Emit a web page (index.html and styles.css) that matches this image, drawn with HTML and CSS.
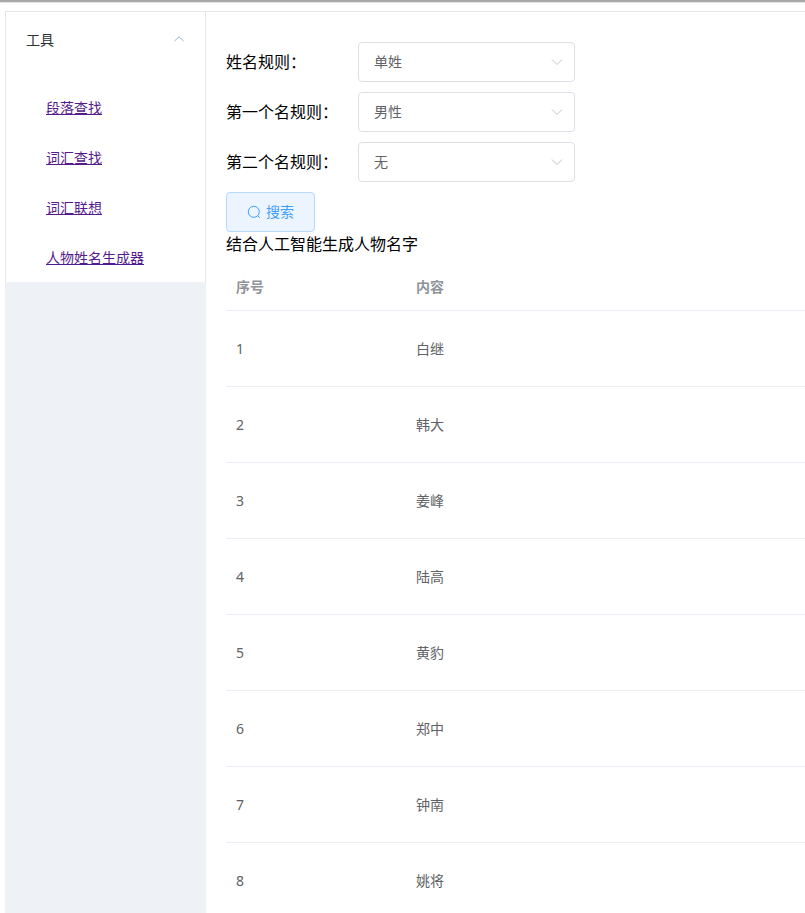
FILE: index.html
```html
<!DOCTYPE html>
<html lang="zh">
<head>
<meta charset="utf-8">
<title>人物姓名生成器</title>
<link rel="stylesheet" href="styles.css">
</head>
<body>
<div class="topline"></div>
<div class="layout">
  <aside class="aside">
    <nav class="menu">
      <div class="menu-title">
        <span>工具</span>
        <svg class="chevron-up" width="12" height="12" viewBox="0 0 12 12"><path d="M1.5 8 L6 3.800 L10.500 8" fill="none" stroke="#8fb4d8" stroke-width="1"/></svg>
      </div>
      <ul class="submenu">
        <li><a href="#a">段落查找</a></li>
        <li><a href="#b">词汇查找</a></li>
        <li><a href="#c">词汇联想</a></li>
        <li><a href="#d">人物姓名生成器</a></li>
      </ul>
    </nav>
  </aside>
  <main class="main">
    <form class="form">
      <div class="form-row">
        <label class="label">姓名规则：</label>
        <div class="select"><span class="value">单姓</span><svg width="14" height="14" viewBox="0 0 14 14"><path d="M2 4.500 L7 9.500 L12 4.500" fill="none" stroke="#c0c4cc" stroke-width="1"/></svg></div>
      </div>
      <div class="form-row">
        <label class="label">第一个名规则：</label>
        <div class="select"><span class="value">男性</span><svg width="14" height="14" viewBox="0 0 14 14"><path d="M2 4.500 L7 9.500 L12 4.500" fill="none" stroke="#c0c4cc" stroke-width="1"/></svg></div>
      </div>
      <div class="form-row">
        <label class="label">第二个名规则：</label>
        <div class="select"><span class="value">无</span><svg width="14" height="14" viewBox="0 0 14 14"><path d="M2 4.500 L7 9.500 L12 4.500" fill="none" stroke="#c0c4cc" stroke-width="1"/></svg></div>
      </div>
      <button type="button" class="btn">
        <svg width="14" height="14" viewBox="0 0 14 14"><circle cx="6.800" cy="6.800" r="5.500" fill="none" stroke="#409eff" stroke-width="1"/><path d="M10.800 10.800 L12.800 12.800" stroke="#409eff" stroke-width="1"/></svg>
        <span class="value">搜索</span>
      </button>
    </form>
    <div class="caption">结合人工智能生成人物名字</div>
    <table class="table">
      <thead><tr><th class="col-a">序号</th><th>内容</th></tr></thead>
      <tbody>
        <tr><td>1</td><td>白继</td></tr>
        <tr><td>2</td><td>韩大</td></tr>
        <tr><td>3</td><td>姜峰</td></tr>
        <tr><td>4</td><td>陆高</td></tr>
        <tr><td>5</td><td>黄豹</td></tr>
        <tr><td>6</td><td>郑中</td></tr>
        <tr><td>7</td><td>钟南</td></tr>
        <tr><td>8</td><td>姚将</td></tr>
      </tbody>
    </table>
  </main>
</div>
</body>
</html>
```
FILE: styles.css
```css
* { box-sizing: border-box; }
html, body { margin: 0; height: 913px; overflow: hidden; background: #fff; }
body { font-family: "Noto Sans", "Noto Sans CJK SC", sans-serif; font-size: 14px; color: #000; }
.topline { height: 3px; background: linear-gradient(#a8a8a8, #a8a8a8 2px, #e4e4e4 2px); }
.layout { display: flex; margin: 8px 0 0 5px; height: 902px; border-top: 1px solid #e6e6e6; }
.aside { width: 201px; flex: none; background: #eef1f6; }
.menu { background: #fff; height: 270px; border-left: 1px solid #e6e6e6; border-right: 1px solid #e6e6e6; }
.menu-title { height: 54px; display: flex; align-items: center; justify-content: space-between; padding: 0 20px; color: #303133; }
.submenu { list-style: none; margin: 0; padding: 17px 0 0 40px; }
.submenu li { height: 50px; line-height: 50px; }
.submenu a { color: #551a8b; text-decoration: underline; }
.main { flex: 1; min-width: 0; padding: 30px 0 0 20px; }
.form-row { display: flex; align-items: center; height: 40px; margin-bottom: 10px; }
.label { width: 132px; flex: none; font-size: 16px; line-height: 22px; padding-bottom: 1px; color: #000; }
.select { width: 217px; height: 40px; border: 1px solid #dcdfe6; border-radius: 4px; display: flex; align-items: center; justify-content: space-between; padding: 0 10px 0 15px; color: #606266; }
.value { line-height: 20px; padding-bottom: 1px; }
.btn { display: flex; align-items: center; justify-content: center; gap: 5px; width: 89px; height: 40px; padding: 0; background: #ecf5ff; border: 1px solid #b3d8ff; border-radius: 4px; color: #409eff; font: inherit; }
.caption { font-size: 16px; line-height: 24px; color: #000; }
.table { width: 100%; border-collapse: collapse; margin-top: 6px; table-layout: fixed; }
.col-a { width: 180px; }
.table th { height: 48px; text-align: left; padding: 0 10px; color: #909399; font-weight: bold; border-bottom: 1px solid #ebeef5; }
.table td { height: 76px; padding: 0 10px; color: #606266; border-bottom: 1px solid #ebeef5; }
```
